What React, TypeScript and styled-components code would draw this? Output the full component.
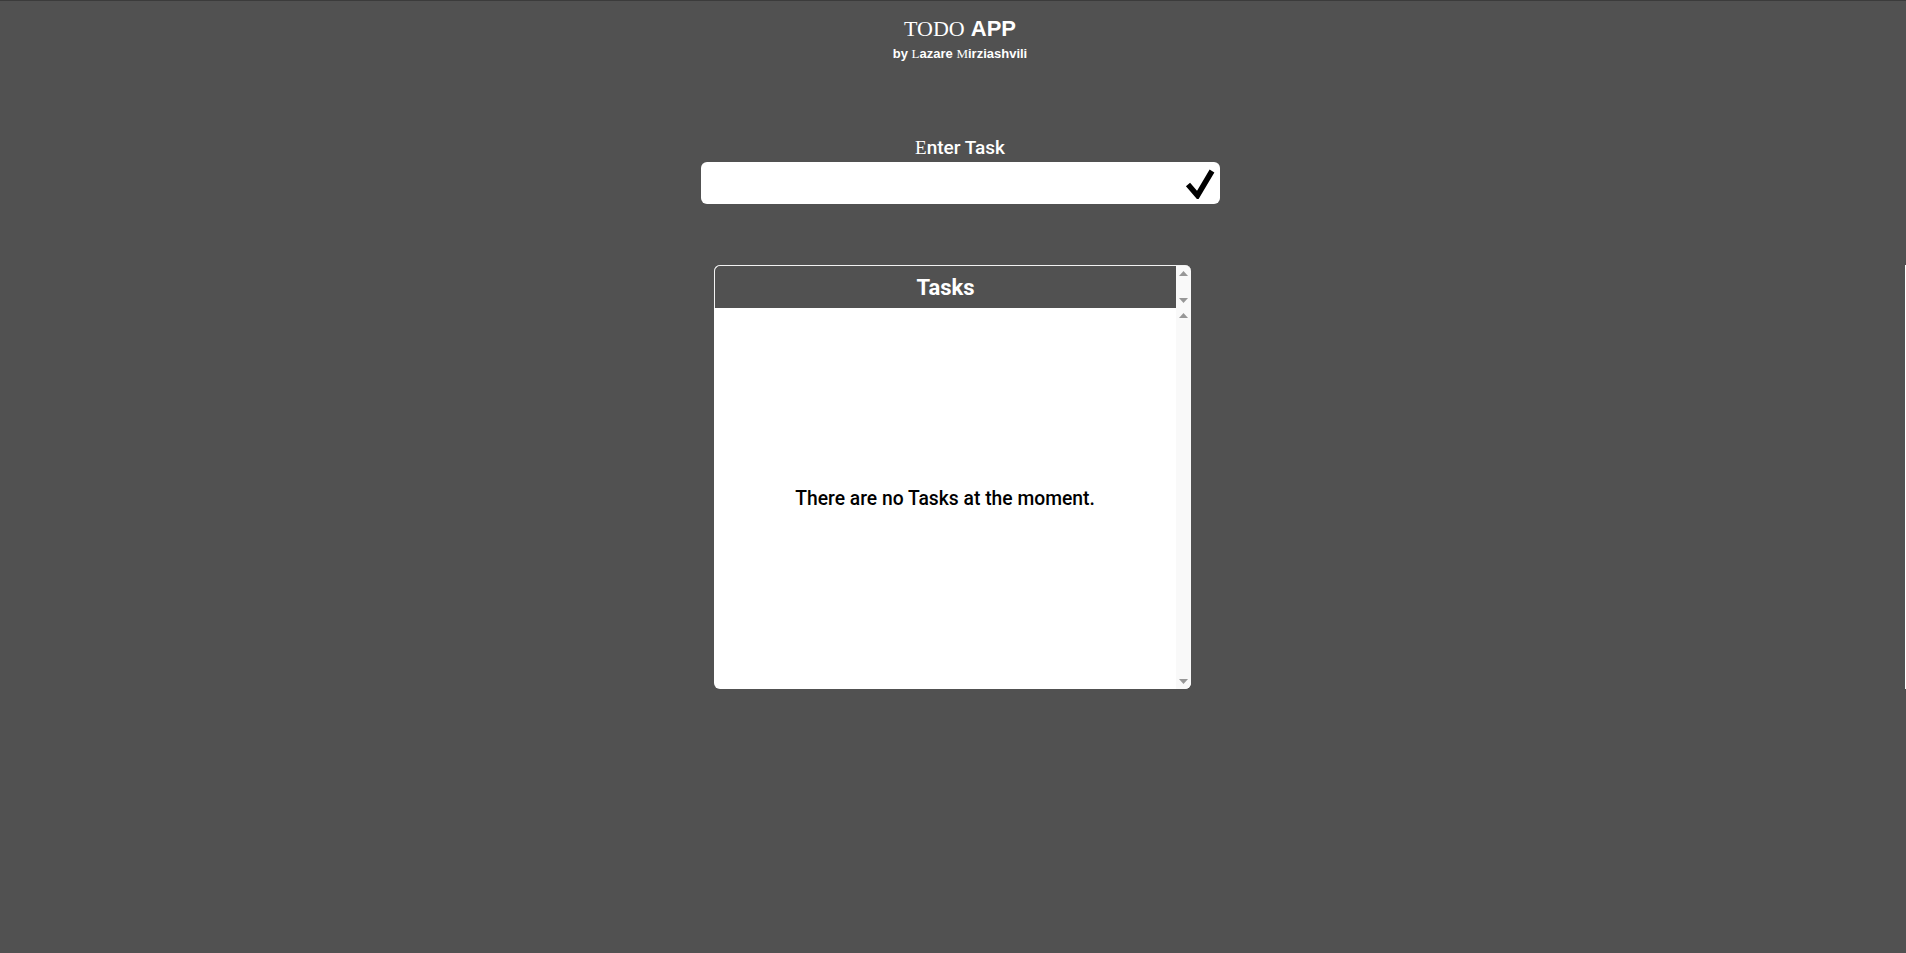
import styled, { createGlobalStyle } from "styled-components";
import { useState } from "react";

const GlobalStyle = createGlobalStyle`
  html, body {
    margin: 0;
    padding: 0;
    background-color: #515151;
  }
  body {
    font-family: Roboto, "Liberation Sans", sans-serif;
  }
`;

// classic scrollbar look: a light track with an arrow at each end
const ScrollBar = () => (
  <Track>
    <ArrowBtn>
      <svg width="9" height="5" viewBox="0 0 9 5">
        <polygon points="0,5 4.5,0 9,5" fill="#979797" />
      </svg>
    </ArrowBtn>
    <ArrowBtn>
      <svg width="9" height="5" viewBox="0 0 9 5">
        <polygon points="0,0 9,0 4.5,5" fill="#979797" />
      </svg>
    </ArrowBtn>
  </Track>
);

const App = () => {
  const [task, setTask] = useState("");
  const tasks: string[] = [];

  return (
    <Page>
      <GlobalStyle />
      <Header>
        <Title>
          <Serif>TODO</Serif> <Sans>APP</Sans>
        </Title>
        <Author>
          by <Serif>L</Serif>azare <Serif>M</Serif>irziashvili
        </Author>
      </Header>

      <Form onSubmit={(e) => e.preventDefault()}>
        <Label htmlFor="task">
          <Serif>E</Serif>nter Task
        </Label>
        <InputBox>
          <Input id="task" value={task} onChange={(e) => setTask(e.target.value)} />
          <Submit type="submit" aria-label="add task">
            <svg width="30" height="31" viewBox="0 0 30 31">
              <polyline
                points="3,16.5 12.5,27.5 27,3"
                fill="none"
                stroke="#000"
                strokeWidth="5.5"
                strokeLinejoin="miter"
              />
            </svg>
          </Submit>
        </InputBox>
      </Form>

      <TaskRow>
        <Panel>
          <PanelHead>
            <PanelTitle>Tasks</PanelTitle>
            <ScrollBar />
          </PanelHead>
          <PanelBody>
            <List>
              {tasks.length === 0 ? (
                <Empty>There are no Tasks at the moment.</Empty>
              ) : (
                tasks.map((t) => <div key={t}>{t}</div>)
              )}
            </List>
            <ScrollBar />
          </PanelBody>
        </Panel>
      </TaskRow>
    </Page>
  );
};
export default App;

const Page = styled.div`
  min-height: 952px;
  border-top: 1px solid #3b3b3b;
  display: flex;
  flex-direction: column;
  align-items: center;
`;

const Header = styled.header`
  display: flex;
  flex-direction: column;
  align-items: center;
  margin-top: 15px;
  margin-left: 14px;
  color: #fff;
`;

const Serif = styled.span`
  font-family: "Liberation Serif", serif;
  font-weight: normal;
`;

const Sans = styled.span`
  font-family: "Liberation Sans", sans-serif;
  font-weight: bold;
`;

const Title = styled.h1`
  margin: 0;
  font-size: 22px;
  line-height: 26px;
  font-weight: normal;
  font-family: "Liberation Sans", sans-serif;
`;

const Author = styled.div`
  margin-top: 4px;
  font-size: 13px;
  line-height: 16px;
  font-weight: bold;
  font-family: "Liberation Sans", sans-serif;
`;

const Form = styled.form`
  margin-top: 75px;
  margin-left: 14px;
  display: flex;
  flex-direction: column;
  align-items: center;
`;

const Label = styled.label`
  font-size: 19px;
  line-height: 22px;
  font-weight: 500;
  color: #fff;
  margin-bottom: 3px;
`;

const InputBox = styled.div`
  width: 519px;
  height: 42px;
  box-sizing: border-box;
  background: #fff;
  border-radius: 6px;
  display: flex;
  align-items: center;
  padding: 0 5px 0 10px;
`;

const Input = styled.input`
  flex: 1;
  border: none;
  outline: none;
  background: transparent;
  font-size: 18px;
  font-family: Roboto, sans-serif;
`;

const Submit = styled.button`
  border: none;
  background: transparent;
  padding: 0;
  display: flex;
  align-items: center;
  cursor: pointer;
`;

const TaskRow = styled.div`
  margin-top: 61px;
  width: 100%;
  box-sizing: border-box;
  border-right: 1px solid #fff;
  display: flex;
  justify-content: center;
`;

const Panel = styled.section`
  width: 477px;
  border-radius: 6px;
  overflow: hidden;
  background: #fff;
  display: flex;
  flex-direction: column;
`;

const PanelHead = styled.div`
  height: 43px;
  box-sizing: border-box;
  border-top: 1px solid #f2f2f2;
  border-left: 1px solid #f2f2f2;
  border-top-left-radius: 6px;
  background: #515151;
  display: flex;
`;

const PanelTitle = styled.h2`
  flex: 1;
  margin: 0;
  color: #fff;
  font-size: 22px;
  font-weight: bold;
  display: flex;
  align-items: center;
  justify-content: center;
`;

const Track = styled.div`
  width: 15px;
  flex-shrink: 0;
  background: #f9f9f9;
  display: flex;
  flex-direction: column;
  justify-content: space-between;
`;

const ArrowBtn = styled.div`
  height: 15px;
  display: flex;
  align-items: center;
  justify-content: center;
`;

const PanelBody = styled.div`
  height: 381px;
  display: flex;
`;

const List = styled.div`
  flex: 1;
  display: flex;
  align-items: center;
  justify-content: center;
`;

const Empty = styled.p`
  margin: 0;
  font-size: 19.3px;
  font-weight: 500;
  color: #000;
`;
